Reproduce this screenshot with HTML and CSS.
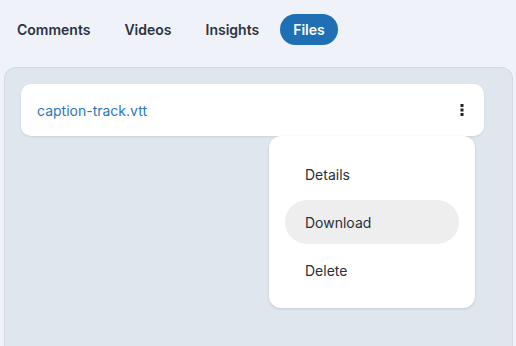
FILE: index.html
```html
<!DOCTYPE html>
<html lang="en">
<head>
  <meta charset="UTF-8">
  <meta name="viewport" content="width=device-width, initial-scale=1.0">
  <title>Files</title>
  <link rel="stylesheet" href="styles.css">
</head>
<body>
  <div class="tabs">
    <button class="tab">Comments</button>
    <button class="tab">Videos</button>
    <button class="tab">Insights</button>
    <button class="tab active">Files</button>
  </div>

  <div class="panel">
    <div class="file-row">
      <a class="file-name" href="#">caption-track.vtt</a>
      <button class="kebab" aria-label="More">
        <svg width="4" height="12" viewBox="0 0 4 12">
          <rect x="0.5" y="0" width="3" height="3" fill="#222"/>
          <rect x="0.5" y="4.5" width="3" height="3" fill="#222"/>
          <rect x="0.5" y="9" width="3" height="3" fill="#222"/>
        </svg>
      </button>
      <div class="menu">
        <div class="menu-item">Details</div>
        <div class="menu-item hover">Download</div>
        <div class="menu-item">Delete</div>
      </div>
    </div>
  </div>
</body>
</html>
```

FILE: styles.css
```css
* {
  margin: 0;
  padding: 0;
  box-sizing: border-box;
  font-family: 'Inter', sans-serif;
}
html, body {
  height: 100%;
}
body {
  background-color: #eff2f8;
  display: flex;
  flex-direction: column;
  overflow: hidden;
}
.tabs {
  display: flex;
  gap: 8px;
  padding: 14px 0 0 4px;
}
.tab {
  border: none;
  background: none;
  height: 31px;
  padding: 0 13px;
  border-radius: 16px;
  font-size: 14px;
  font-weight: 600;
  color: #2b3340;
  cursor: pointer;
}
.tab.active {
  background-color: #1f6fb4;
  color: #ffffff;
}
.panel {
  flex: 1;
  margin: 22px 3px 0 4px;
  background-color: #e0e6ee;
  border: 1px solid #d3dae4;
  border-bottom: none;
  border-radius: 12px 12px 0 0;
  padding: 16px 28px 0 16px;
}
.file-row {
  position: relative;
  height: 52px;
  background-color: #ffffff;
  border-radius: 10px;
  box-shadow: 0 1px 2px rgba(60,70,90,0.12);
  display: flex;
  align-items: center;
  justify-content: space-between;
  padding: 0 19px 0 16px;
}
.file-name {
  color: #2a77bd;
  font-size: 14px;
  text-decoration: none;
}
.kebab {
  border: none;
  background: none;
  display: flex;
  width: 6px;
  justify-content: center;
  cursor: pointer;
}
.menu {
  position: absolute;
  top: 52px;
  right: 9px;
  width: 206px;
  background-color: #ffffff;
  border-radius: 12px;
  box-shadow: 0 1px 3px rgba(60,70,90,0.18);
  padding: 16px;
  display: flex;
  flex-direction: column;
  gap: 4px;
}
.menu-item {
  height: 44px;
  display: flex;
  align-items: center;
  padding-left: 20px;
  border-radius: 22px;
  font-size: 14px;
  color: #2b2f36;
}
.menu-item.hover {
  background-color: #eeeeee;
}
```
